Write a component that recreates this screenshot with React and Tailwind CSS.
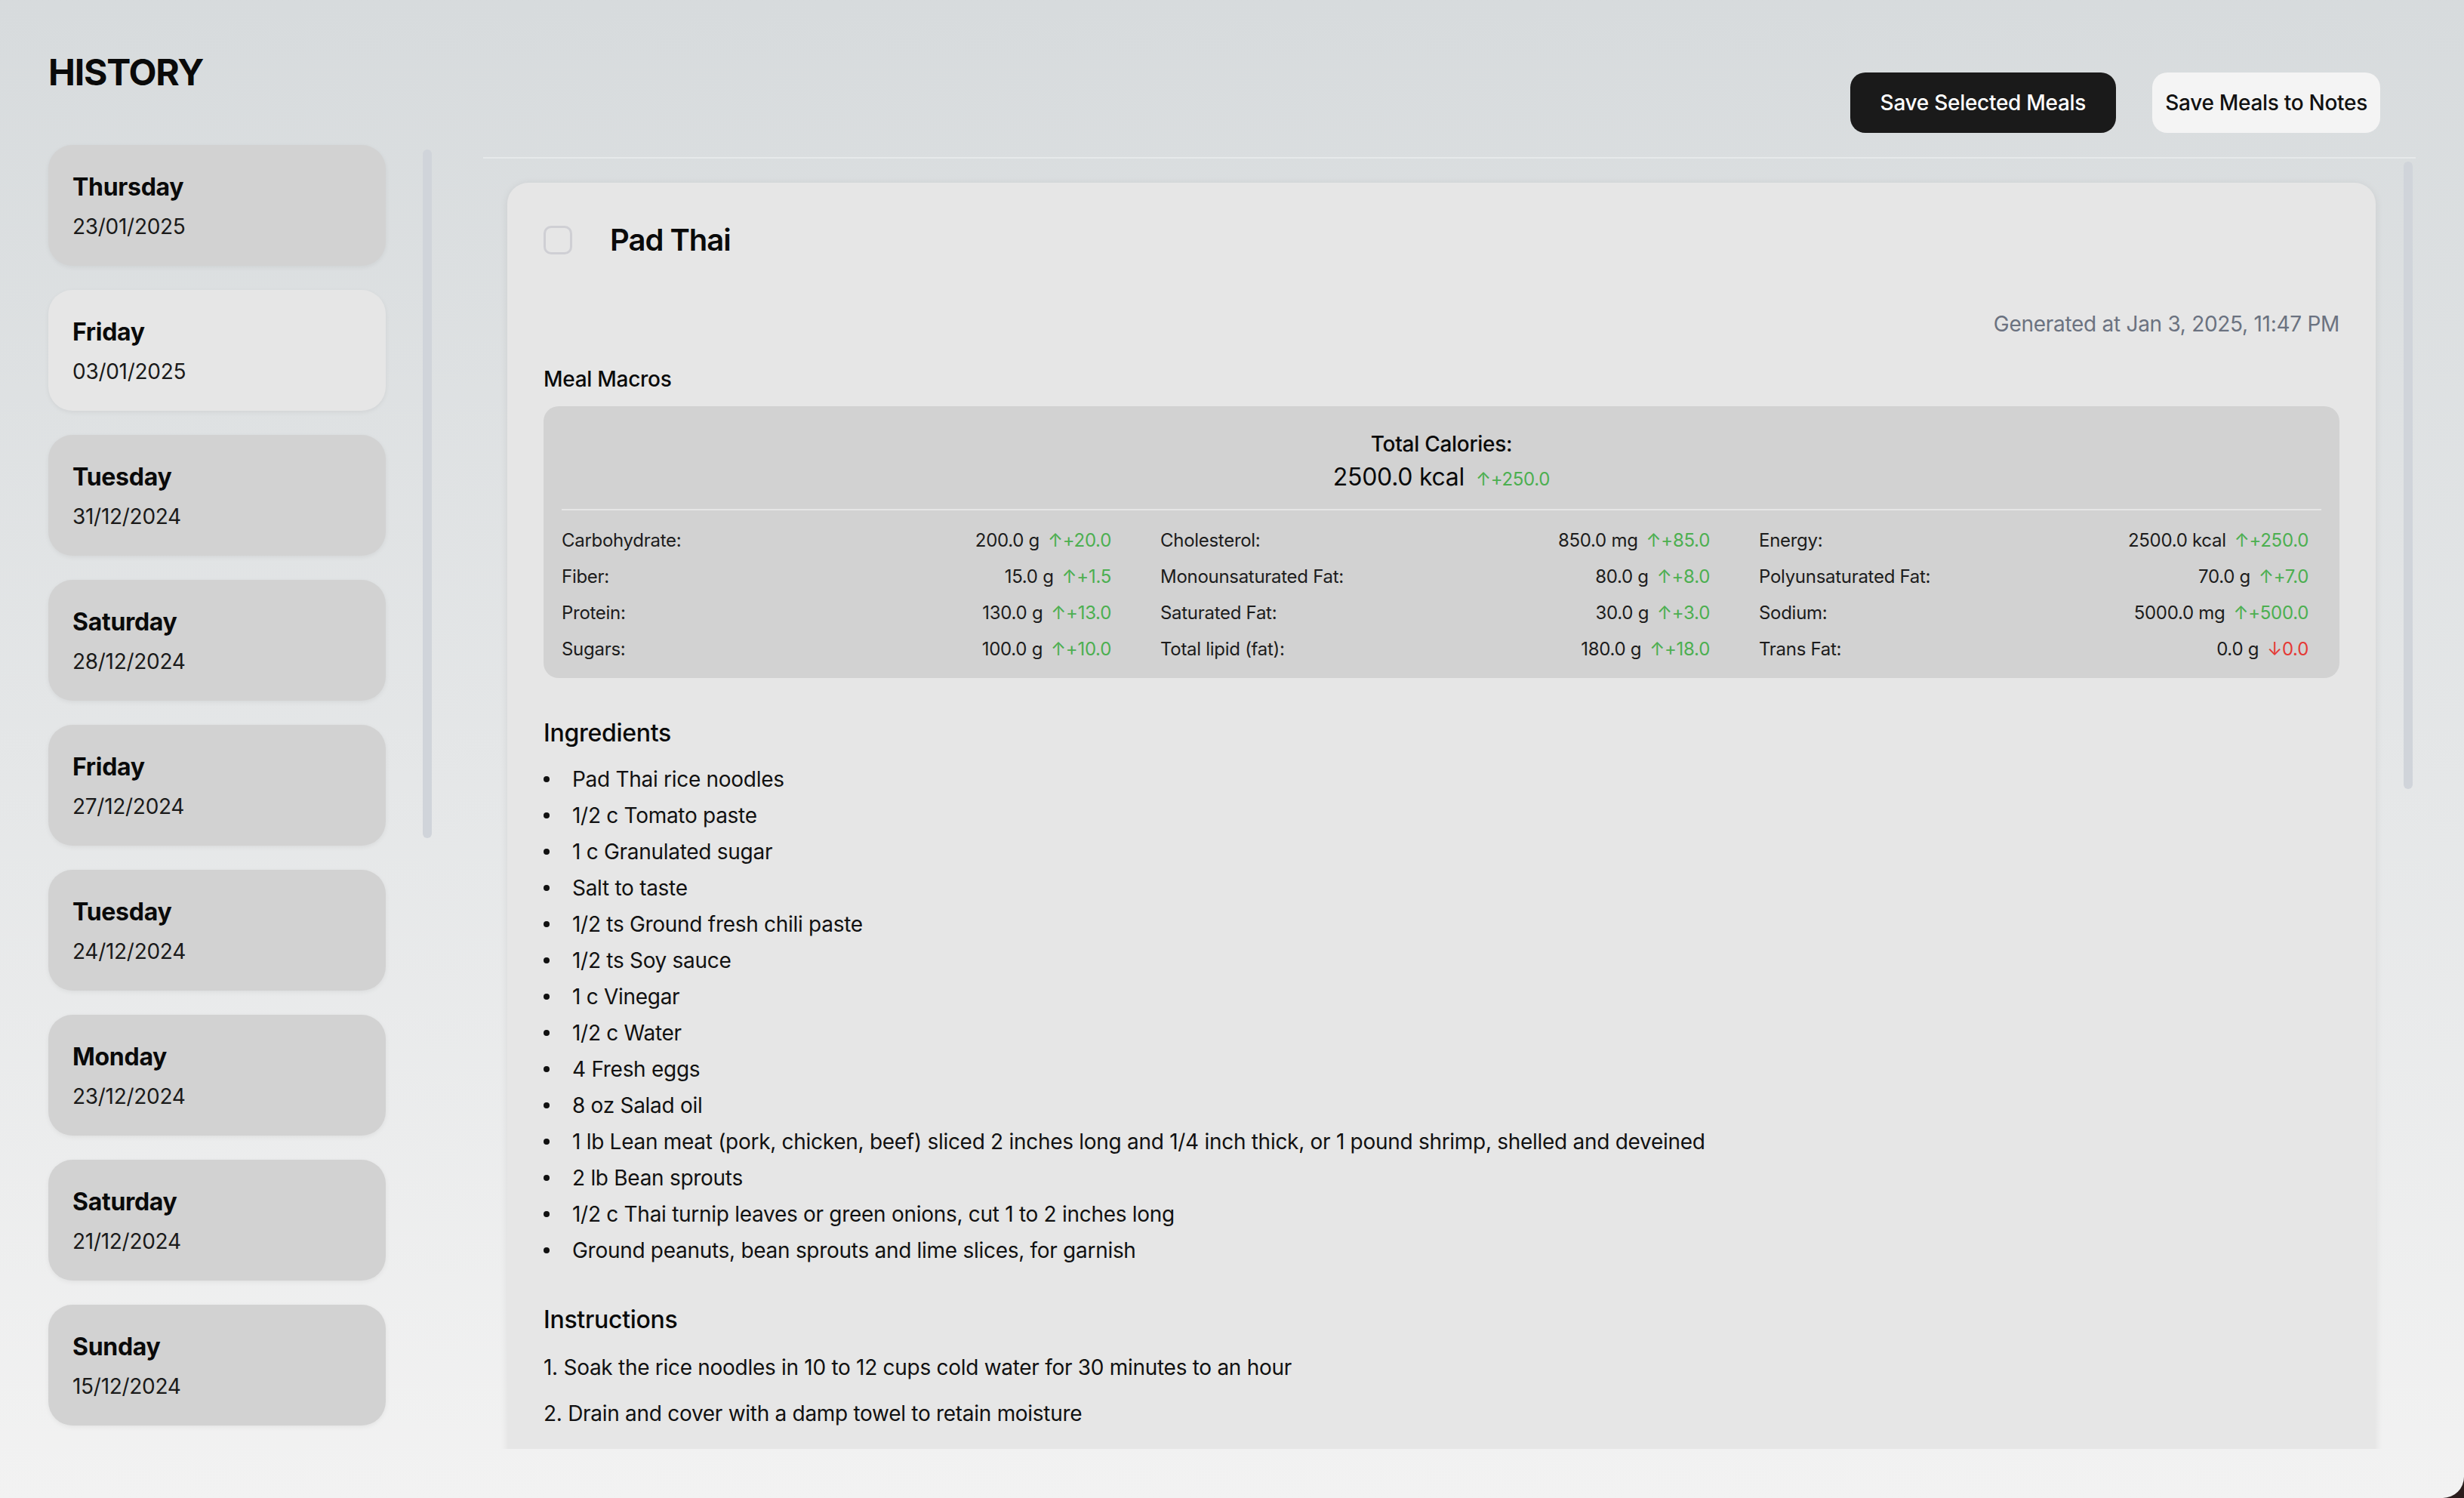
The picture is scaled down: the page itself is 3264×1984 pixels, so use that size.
import React from 'react'

const days = [
  { day: 'Thursday', date: '23/01/2025' },
  { day: 'Friday', date: '03/01/2025', selected: true },
  { day: 'Tuesday', date: '31/12/2024' },
  { day: 'Saturday', date: '28/12/2024' },
  { day: 'Friday', date: '27/12/2024' },
  { day: 'Tuesday', date: '24/12/2024' },
  { day: 'Monday', date: '23/12/2024' },
  { day: 'Saturday', date: '21/12/2024' },
  { day: 'Sunday', date: '15/12/2024' },
]

// row-major order, three columns
const macros = [
  { label: 'Carbohydrate:', value: '200.0 g', delta: '+20.0', up: true },
  { label: 'Cholesterol:', value: '850.0 mg', delta: '+85.0', up: true },
  { label: 'Energy:', value: '2500.0 kcal', delta: '+250.0', up: true },
  { label: 'Fiber:', value: '15.0 g', delta: '+1.5', up: true },
  { label: 'Monounsaturated Fat:', value: '80.0 g', delta: '+8.0', up: true },
  { label: 'Polyunsaturated Fat:', value: '70.0 g', delta: '+7.0', up: true },
  { label: 'Protein:', value: '130.0 g', delta: '+13.0', up: true },
  { label: 'Saturated Fat:', value: '30.0 g', delta: '+3.0', up: true },
  { label: 'Sodium:', value: '5000.0 mg', delta: '+500.0', up: true },
  { label: 'Sugars:', value: '100.0 g', delta: '+10.0', up: true },
  { label: 'Total lipid (fat):', value: '180.0 g', delta: '+18.0', up: true },
  { label: 'Trans Fat:', value: '0.0 g', delta: '0.0', up: false },
]

const ingredients = [
  'Pad Thai rice noodles',
  '1/2 c Tomato paste',
  '1 c Granulated sugar',
  'Salt to taste',
  '1/2 ts Ground fresh chili paste',
  '1/2 ts Soy sauce',
  '1 c Vinegar',
  '1/2 c Water',
  '4 Fresh eggs',
  '8 oz Salad oil',
  '1 lb Lean meat (pork, chicken, beef) sliced 2 inches long and 1/4 inch thick, or 1 pound shrimp, shelled and deveined',
  '2 lb Bean sprouts',
  '1/2 c Thai turnip leaves or green onions, cut 1 to 2 inches long',
  'Ground peanuts, bean sprouts and lime slices, for garnish',
]

const instructions = [
  '1. Soak the rice noodles in 10 to 12 cups cold water for 30 minutes to an hour',
  '2. Drain and cover with a damp towel to retain moisture',
]

function DayCard({ item }) {
  return (
    <div
      className={
        item.selected
          ? 'rounded-[32px] bg-[#e6e6e6] p-[32px] shadow-[0_2px_6px_rgba(0,0,0,0.06)]'
          : 'rounded-[32px] bg-[#d2d2d2] p-[32px] shadow-[0_2px_6px_rgba(0,0,0,0.06)]'
      }
    >
      <div className="text-[32px] leading-[48px] font-bold text-[#0a0a0a]">{item.day}</div>
      <div className="mt-[8px] text-[28px] leading-[40px] text-[#1a1a1a]">{item.date}</div>
    </div>
  )
}

function MacroRow({ m }) {
  return (
    <div className="flex justify-between pr-[17px] text-[24px] leading-[32px] text-[#1c1c1c]">
      <span>{m.label}</span>
      <span>
        {m.value}
        <span className={m.up ? 'ml-[11px] text-[#4caf50]' : 'ml-[11px] text-[#e53935]'}>
          {m.up ? '↑' : '↓'}{m.delta}
        </span>
      </span>
    </div>
  )
}

export default function App() {
  return (
    <div
      className="h-screen w-full bg-[#2b1d1d] overflow-hidden tracking-[-0.018em]"
      style={{ fontFamily: 'Inter, "Noto Sans", sans-serif' }}
    >
      <div className="h-full w-full flex rounded-br-[28px] overflow-hidden bg-gradient-to-b from-[#d7dbdd] to-[#f2f2f2] text-[#0a0a0a]">
        {/* sidebar */}
        <aside className="w-[640px] shrink-0 pl-[64px] pt-[72px]">
          <h1 className="text-[48px] leading-[48px] font-bold tracking-tight">HISTORY</h1>
          <div className="mt-[72px] flex">
            <div className="w-[447px] flex flex-col gap-[32px]">
              {days.map(function (d, i) {
                return <DayCard key={i} item={d} />
              })}
            </div>
            <div className="ml-[49px] mt-[6px] w-[12px] h-[912px] rounded-full bg-[#d0d4da]" />
          </div>
        </aside>

        {/* main */}
        <main className="flex-1 pr-[64px] pt-[96px] pb-[65px] flex flex-col min-w-0">
          <div className="flex justify-end gap-[48px] pr-[47px]">
            <button className="h-[80px] px-[40px] rounded-[20px] bg-[#1a1a1a] text-white text-[28px] font-medium">
              Save Selected Meals
            </button>
            <button className="h-[80px] px-[17px] rounded-[20px] bg-[#f4f4f4] text-[#111] text-[28px] font-medium">
              Save Meals to Notes
            </button>
          </div>
          <div className="mt-[32px] h-[2px] bg-[#e6e9ea]" />

          <div className="flex-1 flex overflow-hidden pl-[32px]">
            <div className="flex-1 min-w-0">
              <div className="mt-[32px] rounded-[28px] bg-[#e6e6e6] px-[48px] pt-[48px] pb-[80px] shadow-[0_2px_12px_rgba(0,0,0,0.08)]">
                <div className="flex items-center h-[56px]">
                  <div className="w-[38px] h-[38px] rounded-[10px] border-[3px] border-[#cfcfd4]" />
                  <h2 className="ml-[50px] text-[40px] leading-[56px] font-semibold tracking-tight">Pad Thai</h2>
                </div>

                <p className="mt-[63px] text-right text-[28px] leading-[40px] text-[#6b7280]">
                  Generated at Jan 3, 2025, 11:47 PM
                </p>

                <h3 className="mt-[33px] text-[28px] leading-[40px] font-medium">Meal Macros</h3>

                <div className="mt-[16px] rounded-[20px] bg-[#d2d2d2] px-[24px] pt-[30px] pb-[22px]">
                  <div className="text-center pb-[18px] border-b-2 border-[#e6e6e6]">
                    <div className="text-[28px] leading-[40px] font-medium">Total Calories:</div>
                    <div className="flex items-baseline justify-center gap-[15px]">
                      <span className="text-[32px] leading-[48px]">2500.0 kcal</span>
                      <span className="text-[24px] text-[#4caf50]">↑+250.0</span>
                    </div>
                  </div>
                  <div className="pt-[24px] grid grid-cols-3 gap-x-[48px] gap-y-[16px]">
                    {macros.map(function (m, i) {
                      return <MacroRow key={i} m={m} />
                    })}
                  </div>
                </div>

                <h3 className="mt-[49px] text-[32px] leading-[48px] font-medium">Ingredients</h3>
                <ul className="mt-[13px]">
                  {ingredients.map(function (ing, i) {
                    return (
                      <li key={i} className="flex items-center text-[28px] leading-[48px] text-[#111]">
                        <span className="w-[8px] h-[8px] rounded-full bg-[#111] shrink-0" />
                        <span className="ml-[30px]">{ing}</span>
                      </li>
                    )
                  })}
                </ul>

                <h3 className="mt-[44px] text-[32px] leading-[48px] font-medium">Instructions</h3>
                <p className="mt-[19px] text-[28px] leading-[40px] text-[#111]">{instructions[0]}</p>
                <p className="mt-[21px] text-[28px] leading-[40px] text-[#111]">{instructions[1]}</p>
              </div>
            </div>
            <div className="ml-[37px] mr-[4px] mt-[4px] w-[12px] h-[831px] rounded-full bg-[#d0d4da] shrink-0" />
          </div>
        </main>
      </div>
    </div>
  )
}
